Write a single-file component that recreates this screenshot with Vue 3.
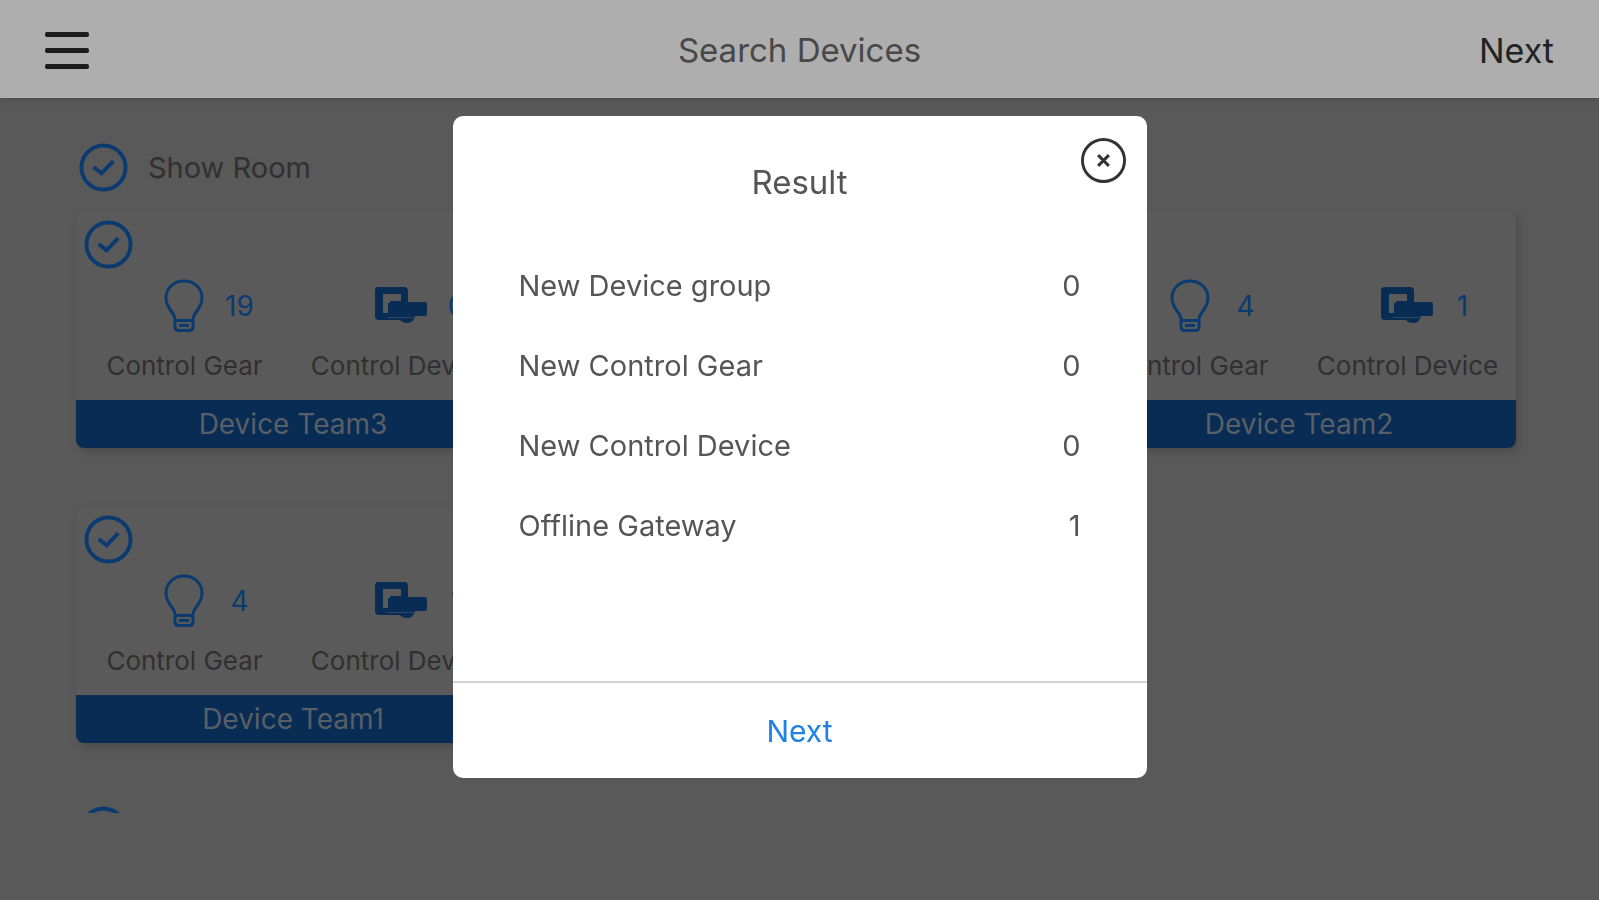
<script setup>
  import { ref } from 'vue';

  const rooms = ref([
    {
      name: 'Show Room',
      checked: true,
      teams: [
        { name: 'Device Team3', gear: 19, device: 0, checked: true },
        { name: 'Device Team2', gear: 4, device: 1, checked: false, last: true },
        { name: 'Device Team1', gear: 4, device: 1, checked: true },
      ],
    },
    { name: '', checked: true, teams: [] },
  ]);

  const results = [
    { label: 'New Device group', value: 0 },
    { label: 'New Control Gear', value: 0 },
    { label: 'New Control Device', value: 0 },
    { label: 'Offline Gateway', value: 1 },
  ];

  const showResult = ref(true);
</script>

<template>
  <div class="page">
    <header class="topbar">
      <button class="menu" aria-label="Menu">
        <span></span>
        <span></span>
        <span></span>
      </button>
      <h1 class="topbar-title">Search Devices</h1>
      <button class="topbar-next">Next</button>
    </header>

    <main class="content">
      <section v-for="(room, i) in rooms" :key="i" class="room">
        <label class="room-head">
          <input v-model="room.checked" type="checkbox" class="check" aria-label="Select room">
          <svg class="check-icon" viewBox="0 0 50 50" aria-hidden="true">
            <circle cx="25" cy="25" r="22.5" />
            <path v-if="room.checked" d="M15 24.5 L23 31 L35 18.5" />
          </svg>
          <span>{{ room.name }}</span>
        </label>

        <div class="teams">
          <article v-for="team in room.teams" :key="team.name" class="team" :class="{ 'team-last': team.last }">
            <label class="team-check">
              <input v-model="team.checked" type="checkbox" class="check" :aria-label="team.name">
              <svg v-if="team.checked" class="check-icon" viewBox="0 0 50 50" aria-hidden="true">
                <circle cx="25" cy="25" r="22.5" />
                <path d="M15 24.5 L23 31 L35 18.5" />
              </svg>
            </label>
            <div class="stats">
              <div class="stat">
                <div class="stat-row">
                  <svg class="stat-icon" viewBox="0 0 52 54" aria-hidden="true">
                    <path class="line" d="M16 40 C16 34 7 30 7 19 C7 9 15 2 25 2 C35 2 43 9 43 19 C43 30 34 34 34 40 V48 Q34 51.5 30 51.5 H20 Q16 51.5 16 48 Z M16 41.5 H34 M20 46.500 H30" />
                  </svg>
                  <span class="stat-value">{{ team.gear }}</span>
                </div>
                <div class="stat-label">Control Gear</div>
              </div>
              <div class="stat">
                <div class="stat-row">
                  <svg class="stat-icon" viewBox="0 0 52 54" aria-hidden="true">
                    <path class="solid" fill-rule="evenodd" d="M2 8 H28 Q32 8 32 12 V23 H49 Q51 23 51 25 V35 Q51 37 49 37 H39 Q37 44 32 44 Q26 44 24 41 H3 Q-1 41 -1 37 V12 Q-1 8 2 8 Z M7 15 V34 H12 V24 H14 V22 H25 V15 Z" />
                    <path class="cut" d="M11 38.500 H40" />
                  </svg>
                  <span class="stat-value">{{ team.device }}</span>
                </div>
                <div class="stat-label">Control Device</div>
              </div>
            </div>
            <div class="team-name">{{ team.name }}</div>
          </article>
        </div>
      </section>
    </main>

    <div v-if="showResult" class="overlay">
      <div class="dialog" role="dialog" aria-labelledby="result-title">
        <button class="close" aria-label="Close" @click="showResult = false">
          <svg viewBox="0 0 46 46" aria-hidden="true">
            <circle cx="23" cy="23" r="21.5" />
            <path d="M17.500 17.500 L28.500 28.500 M28.500 17.500 L17.500 28.500" />
          </svg>
        </button>
        <h2 id="result-title" class="dialog-title">Result</h2>
        <dl class="results">
          <div v-for="item in results" :key="item.label" class="result">
            <dt>{{ item.label }}</dt>
            <dd>{{ item.value }}</dd>
          </div>
        </dl>
        <button class="dialog-next" @click="showResult = false">Next</button>
      </div>
    </div>
  </div>
</template>

<style>
  body {
    margin: 0;
    background-color: #595959;
  }
</style>

<style scoped>
  .page {
    --blue: #0b3a70;
    --blue-bar: #092c54;
    min-height: 100vh;
    background-color: #595959;
    color: #303030;
    font-family: Inter, "Liberation Sans", sans-serif;
    font-size: 28px;
  }

  button {
    border: none;
    padding: 0;
    background: none;
    font-family: inherit;
    cursor: pointer;
  }

  .topbar {
    display: grid;
    grid-template-columns: 1fr auto 1fr;
    align-items: center;
    box-sizing: border-box;
    height: 98px;
    padding: 2px 45px 0;
    background-color: #aeaeae;
    box-shadow: 0 1px 6px #484848;
  }

  .menu {
    display: flex;
    flex-direction: column;
    gap: 11px;
    width: 44px;

    & span {
      height: 5px;
      border-radius: 2px;
      background-color: #1c1c1c;
    }
  }

  .topbar-title {
    margin: 0;
    color: #484848;
    font-size: 33px;
    font-weight: 400;
  }

  .topbar-next {
    justify-self: end;
    color: #222;
    font-size: 34px;
  }

  .content {
    box-sizing: border-box;
    height: 715px;
    padding: 44px 83px 0 76px;
    overflow: hidden;
  }

  .room {
    margin-bottom: 62px;
  }

  .room-head {
    display: flex;
    align-items: center;
    gap: 20px;
    height: 50px;
    margin-bottom: 20px;
    padding-left: 3px;
    font-size: 29px;
  }

  .check {
    position: absolute;
    width: 50px;
    height: 50px;
    margin: 0;
    opacity: 0;
  }

  .check-icon {
    display: block;
    width: 49px;
    height: 49px;
    fill: none;
    stroke: var(--blue);
    stroke-width: 4;
  }

  .teams {
    display: grid;
    grid-template-columns: repeat(3, 1fr);
    gap: 59px 69px;
  }

  .team {
    border-radius: 8px;
    box-shadow: 3px 4px 7px #4c4c4c;
    background-color: #5a5a5a;
    overflow: hidden;
  }

  .team-last {
    grid-column: 3;
  }

  .team-check {
    display: block;
    width: 50px;
    height: 50px;
    padding: 8px 8px 9px;
  }

  .stats {
    display: grid;
    grid-template-columns: 1fr 1fr;
    height: 121px;
  }

  .stat {
    text-align: center;
  }

  .stat-row {
    display: grid;
    grid-template-columns: 1fr 52px 1fr;
    align-items: center;
    width: 168px;
    margin: 0 auto;
    color: var(--blue);
  }

  .stat-icon {
    grid-column: 2;
    width: 52px;
    height: 54px;
    overflow: visible;

    & .line {
      fill: none;
      stroke: var(--blue);
      stroke-width: 3;
    }

    & .solid {
      fill: var(--blue-bar);
    }

    & .cut {
      stroke: #31465f;
      stroke-width: 1;
    }
  }

  .stat-label {
    margin-top: 16px;
    font-size: 26px;
    line-height: 34px;
    white-space: nowrap;
  }

  .team-name {
    height: 48px;
    background-color: var(--blue-bar);
    color: #595f66;
    line-height: 48px;
    text-align: center;
  }

  .overlay {
    position: fixed;
    inset: 0;
    display: flex;
    align-items: center;
    justify-content: center;
    padding-bottom: 6px;
  }

  .dialog {
    position: relative;
    width: min(694px, 90vw);
    border-radius: 10px;
    background-color: #fff;
    color: #555;
    overflow: hidden;
  }

  .close {
    position: absolute;
    top: 22px;
    right: 21px;
    width: 45px;
    height: 45px;

    & svg {
      display: block;
      fill: none;
      stroke: #333;
      stroke-width: 3;
    }
  }

  .dialog-title {
    margin: 0;
    padding: 46px 0 44px;
    font-size: 33px;
    font-weight: 400;
    line-height: 40px;
    text-align: center;
  }

  .results {
    margin: 0;
    padding: 0 66px 115px;
  }

  .result {
    display: flex;
    justify-content: space-between;
    line-height: 80px;
    font-size: 29px;

    & dd {
      margin: 0;
    }
  }

  .dialog-next {
    display: block;
    width: 100%;
    height: 97px;
    border-top: 2px solid #d4d4d4;
    color: #1f80e5;
    font-size: 30px;
  }
</style>
